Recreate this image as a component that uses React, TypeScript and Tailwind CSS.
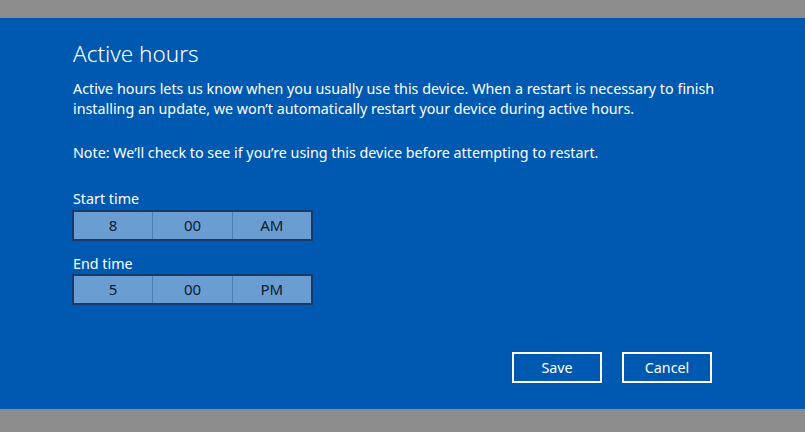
export default function App() {
  const font = { fontFamily: '"Noto Sans", "Open Sans", sans-serif' };

  const TimeBox = ({ parts }: { parts: string[] }) => (
    <div className="flex w-[241px] h-[31px] border-2 border-[#173a6a] bg-[#6a9ed3]">
      {parts.map((p, i) => (
        <div
          key={i}
          className={`flex-1 flex items-center justify-center text-[15px] text-[#0b1a2e] ${
            i > 0 ? 'border-l border-[#4a7db1]' : ''
          }`}
        >
          {p}
        </div>
      ))}
    </div>
  );

  return (
    <div className="w-[805px] h-[432px] bg-[#8c8c8c] flex flex-col" style={font}>
      <div className="mt-[18px] h-[391px] bg-[#0059b0] text-white flex flex-col pl-[72px] pr-[60px]">
        <h1 className="mt-[20px] ml-px text-[22.5px] leading-[32px] font-light">Active hours</h1>
        <p className="mt-[9px] ml-px text-[14.3px] leading-[20px]">
          Active hours lets us know when you usually use this device. When a restart is necessary to finish
          <br />
          installing an update, we won’t automatically restart your device during active hours.
        </p>
        <p className="mt-[24px] ml-px text-[14.3px] leading-[20px]">
          Note: We’ll check to see if you’re using this device before attempting to restart.
        </p>
        <div className="mt-[26px] ml-px text-[14.3px] leading-[20px]">Start time</div>
        <div className="mt-[1px]">
          <TimeBox parts={['8', '00', 'AM']} />
        </div>
        <div className="mt-[13px] ml-px text-[14.3px] leading-[20px]">End time</div>
        <div>
          <TimeBox parts={['5', '00', 'PM']} />
        </div>
        <div className="mt-auto mb-[26px] mr-[33px] flex justify-end gap-[20px]">
          <button className="w-[90px] h-[31px] border-2 border-white text-[14.3px]">Save</button>
          <button className="w-[90px] h-[31px] border-2 border-white text-[14.3px]">Cancel</button>
        </div>
      </div>
    </div>
  );
}
